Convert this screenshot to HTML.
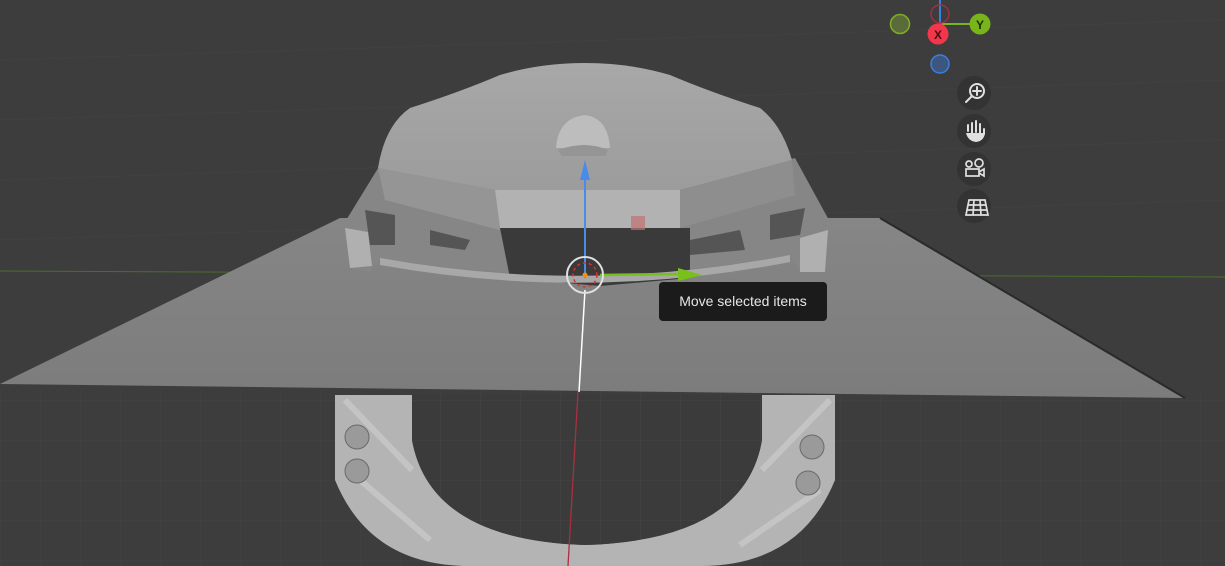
<!DOCTYPE html>
<html><head><meta charset="utf-8"><style>
html,body{margin:0;padding:0;width:1225px;height:566px;overflow:hidden;background:#3d3d3d;font-family:"Liberation Sans",sans-serif}
svg{position:absolute;left:0;top:0}
.tip{position:absolute;left:659px;top:282px;width:168px;height:39px;background:#1b1b1b;border-radius:4px;color:#e6e6e6;font-size:14px;line-height:39px;text-align:center}
.btn{position:absolute;left:957px;width:34px;height:34px;border-radius:50%;background:#333333}
</style></head><body>
<svg width="1225" height="566" viewBox="0 0 1225 566">
<defs>
<pattern id="g" width="40" height="40" patternUnits="userSpaceOnUse"><path d="M0 0H40M0 0V40" stroke="#444" stroke-width="1" fill="none"/></pattern>
<linearGradient id="pl" x1="0" y1="0" x2="0" y2="1"><stop offset="0" stop-color="#868686"/><stop offset="1" stop-color="#7c7c7c"/></linearGradient>
<linearGradient id="dm" x1="0" y1="0" x2="0" y2="1"><stop offset="0" stop-color="#a8a8a8"/><stop offset="1" stop-color="#9c9c9c"/></linearGradient>
</defs>
<rect width="1225" height="566" fill="#3d3d3d"/>
<path d="M0 60L1225 20M0 120L1225 80M0 180L1225 140M0 240L1225 200" stroke="#414141"/>
<rect y="390" width="1225" height="176" fill="url(#g)"/>
<line x1="0" y1="271" x2="1225" y2="277" stroke="#4a6e2c" stroke-width="1"/>
<!-- plane -->
<polygon points="340,218 880,218 1185,398 0,384" fill="url(#pl)"/>
<line x1="880" y1="218" x2="1185" y2="398" stroke="#2a2a2a" stroke-width="2"/>
<!-- ring -->
<path d="M335 395 L412 395 L412 440 Q430 540 585 545 Q745 540 762 440 L762 395 L835 395 L835 480 Q800 566 700 566 L470 566 Q370 566 335 480Z" fill="#b4b4b4"/>
<path d="M412 395 L762 395 L762 440 Q745 540 585 545 Q430 540 412 440Z" fill="#3b3b3b"/>
<path d="M412 395 L762 395 L762 440 Q745 540 585 545 Q430 540 412 440Z" fill="url(#g)"/>
<path d="M345 400 L412 470 M360 480 L430 540 M830 400 L762 470 M820 490 L740 545" stroke="#d0d0d0" stroke-width="6" opacity="0.6"/>
<circle cx="357" cy="437" r="12" fill="#9a9a9a" stroke="#6a6a6a"/><circle cx="357" cy="471" r="12" fill="#9a9a9a" stroke="#6a6a6a"/>
<circle cx="812" cy="447" r="12" fill="#9a9a9a" stroke="#6a6a6a"/><circle cx="808" cy="483" r="12" fill="#9a9a9a" stroke="#6a6a6a"/>
<!-- helmet skirt -->
<path d="M345 222 L380 165 L500 190 L680 190 L795 158 L830 222 L825 270 L800 272 L790 255 Q585 292 380 258 L370 272 L350 268Z" fill="#868686"/>
<path d="M500 228 L690 228 L690 278 L600 286 L510 278Z" fill="#3a3a3a"/>
<path d="M365 210 L395 215 L395 245 L370 245Z M430 230 L470 240 L465 250 L430 245Z M690 240 L740 230 L745 250 L690 255Z M770 215 L805 208 L800 235 L770 240Z" fill="#555"/>
<path d="M345 228 L368 232 L372 266 L350 268Z" fill="#b0b0b0"/>
<path d="M800 238 L828 230 L825 272 L800 272Z" fill="#b0b0b0"/>
<path d="M380 258 Q585 295 790 255 L790 262 Q585 302 380 265Z" fill="#a8a8a8"/>
<!-- dome -->
<path d="M378 168 Q385 125 410 108 Q460 92 500 75 Q540 63 585 63 Q630 63 670 75 Q710 92 760 108 Q782 125 792 160 L680 190 L495 190Z" fill="url(#dm)"/>
<path d="M378 168 L495 190 L500 230 L385 200Z" fill="#959595"/>
<path d="M495 190 L680 190 L680 228 L500 228Z" fill="#b2b2b2"/>
<path d="M680 190 L792 160 L795 195 L680 228Z" fill="#8e8e8e"/>
<path d="M556 148 Q558 118 585 115 Q608 118 610 148Z" fill="#bdbdbd"/>
<path d="M558 150 Q585 140 608 150 L605 156 L562 156Z" fill="#959595"/>
<rect x="631" y="216" width="14" height="14" fill="#c07070" opacity="0.7"/>
<!-- gizmo -->
<line x1="578" y1="392" x2="568" y2="566" stroke="#a83040" stroke-width="1.3"/>
<line x1="585" y1="290" x2="579" y2="392" stroke="#ffffff" stroke-width="1.5"/>
<line x1="585" y1="278" x2="585" y2="175" stroke="#4a8ae8" stroke-width="2"/>
<polygon points="580,180 590,180 585,160" fill="#4a8ae8"/>
<line x1="600" y1="275" x2="680" y2="274" stroke="#7ac01a" stroke-width="2.5"/>
<polygon points="678,268 678,281 702,275" fill="#7ac01a"/>
<circle cx="585" cy="275" r="18" fill="none" stroke="#e0e0e0" stroke-width="2"/>
<circle cx="585" cy="275" r="12" fill="none" stroke="#e03030" stroke-width="1.5" stroke-dasharray="3 3"/>
<circle cx="585" cy="275" r="2.5" fill="#f0901a"/>
<!-- nav gizmo -->
<line x1="940" y1="0" x2="940" y2="34" stroke="#3b7fe0" stroke-width="2"/>
<line x1="940" y1="24" x2="980" y2="24" stroke="#7ab51e" stroke-width="2"/>
<circle cx="900" cy="24" r="9.5" fill="#5a6a3a" stroke="#80b020" stroke-width="1.5"/>
<circle cx="940" cy="14" r="9" fill="none" stroke="#a03040" stroke-width="1.5"/>
<circle cx="940" cy="64" r="9" fill="#3c5680" stroke="#3b7fe0" stroke-width="1.5"/>
<circle cx="938" cy="34" r="10.5" fill="#f2364c"/>
<text x="938" y="39" font-size="12" font-weight="bold" text-anchor="middle" fill="#4a0a10" font-family="Liberation Sans">X</text>
<circle cx="980" cy="24" r="10.5" fill="#78b51a"/>
<text x="980" y="29" font-size="12" font-weight="bold" text-anchor="middle" fill="#203000" font-family="Liberation Sans">Y</text>
</svg>
<div class="btn" style="top:76px"></div>
<div class="btn" style="top:114px"></div>
<div class="btn" style="top:152px"></div>
<div class="btn" style="top:189px"></div>
<svg width="1225" height="566" viewBox="0 0 1225 566" style="pointer-events:none">
<g fill="none" stroke="#e0e0e0" stroke-width="2">
<circle cx="977" cy="91" r="7"/><path d="M977 87v8M973 91h8M972 96l-6 6" stroke-linecap="round"/>
<path d="M968 131v-6M972 133v-10M976 132v-11M980 133v-9M984 134v-5" stroke-linecap="round"/>
</g>
<path d="M966 133 Q968 141 976 142 Q984 141 985 133Z" fill="#e0e0e0"/>
<g fill="none" stroke="#e0e0e0" stroke-width="1.7">
<circle cx="969" cy="164" r="3"/><circle cx="979" cy="163" r="4"/>
<rect x="966" y="169" width="13" height="7"/><path d="M979 172l5-3v7l-5-3"/>
<path d="M966 215l3-15h16l3 15Z M968 205h18M967 210h20M974 200l-1 15M980 200l1 15"/>
</g>
</svg>
<div class="tip">Move selected items</div>
</body></html>
